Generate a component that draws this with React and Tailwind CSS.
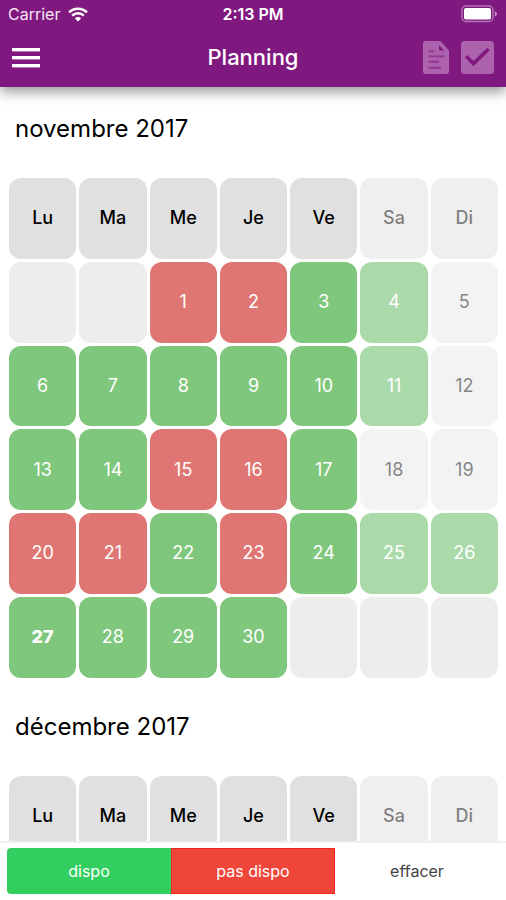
import { useState } from "react";
import clsx from "clsx";

const WEEKDAYS = ["Lu", "Ma", "Me", "Je", "Ve", "Sa", "Di"];

// offset = empty cells before the 1st of the month
const MONTHS = [
  {
    id: "2017-11",
    label: "novembre 2017",
    offset: 2,
    days: 30,
    today: 27,
    busy: [1, 2, 15, 16, 20, 21, 23],
    unset: [5, 12, 18, 19],
  },
  {
    id: "2017-12",
    label: "décembre 2017",
    offset: 4,
    days: 31,
    today: null,
    busy: [],
    unset: [2, 3, 9, 10, 16, 17, 23, 24, 30, 31],
  },
];

const MODES = [
  { id: "dispo", label: "dispo", className: "rounded-l-sm bg-[#32cf60] text-white" },
  { id: "busy", label: "pas dispo", className: "border border-[#f0271c] bg-[#f0463a] text-white" },
  { id: "unset", label: "effacer", className: "text-[#444]" },
];

const dayColors = {
  dispo: "bg-[#7fc77d] text-white",
  busy: "bg-[#df7673] text-white",
  unset: "bg-[#eee] text-[#444]",
};

function buildInitialStatus() {
  const status = {};
  MONTHS.forEach((month) => {
    for (let day = 1; day <= month.days; day++) {
      let value = "dispo";
      if (month.busy.includes(day)) value = "busy";
      if (month.unset.includes(day)) value = "unset";
      status[`${month.id}-${day}`] = value;
    }
  });
  return status;
}

function getWeeks(month) {
  const cells = Array(month.offset).fill(null);
  for (let day = 1; day <= month.days; day++) cells.push(day);
  while (cells.length % 7) cells.push(null);

  const weeks = [];
  for (let i = 0; i < cells.length; i += 7) weeks.push(cells.slice(i, i + 7));
  return weeks;
}

function WifiIcon() {
  return (
    <svg viewBox="0 0 20 15" className="h-[15px] w-5" fill="none" stroke="currentColor" strokeWidth="2.5" aria-hidden="true">
      <path d="M1 5.4a12.8 12.8 0 0 1 18 0" />
      <path d="M4.2 8.7a8.2 8.2 0 0 1 11.6 0" />
      <path d="M10 14.6 6.9 11.4a4.4 4.4 0 0 1 6.2 0z" fill="currentColor" stroke="none" />
    </svg>
  );
}

function BatteryIcon() {
  return (
    <svg viewBox="0 0 37 18" className="h-[18px] w-[37px]" aria-hidden="true">
      <rect x="1" y="1" width="31" height="15.5" rx="4" fill="none" stroke="#fff" strokeOpacity="0.4" strokeWidth="1.4" />
      <rect x="3" y="3" width="27" height="11.5" rx="2" fill="#fff" />
      <path d="M33.8 6.2c1.4.4 2.2 1.4 2.2 2.6s-.8 2.2-2.2 2.6z" fill="#fff" fillOpacity="0.5" />
    </svg>
  );
}

function MenuIcon() {
  return (
    <svg viewBox="0 0 28 22" className="h-[22px] w-7" fill="currentColor" aria-hidden="true">
      <rect y="1" width="28" height="3.4" />
      <rect y="9" width="28" height="3.4" />
      <rect y="17" width="28" height="3.4" />
    </svg>
  );
}

function DocumentIcon() {
  return (
    <svg viewBox="0 0 26 33" className="h-[33px] w-[26px]" aria-hidden="true">
      <path d="M3 0h14.5L26 9.5V30a3 3 0 0 1-3 3H3a3 3 0 0 1-3-3V3a3 3 0 0 1 3-3z" fill="#ad62ad" />
      <path d="M16 4v5.2l5.2.8z" fill="#80197f" />
      <path d="M5.5 10.2h5.5M5.5 15.4h16M5.5 20.8h10.5M5.5 26.8h12.5" stroke="#80197f" strokeOpacity="0.6" strokeWidth="1.9" />
    </svg>
  );
}

function CheckIcon() {
  return (
    <svg viewBox="0 0 33 33" className="size-[33px]" aria-hidden="true">
      <rect width="33" height="33" rx="3.5" fill="#ad62ad" />
      <path d="M5.2 15.2 12.4 22.6 27.6 8" fill="none" stroke="#80197f" strokeWidth="3.6" />
    </svg>
  );
}

function Header() {
  return (
    <header className="relative z-10 bg-[#80197f] text-white shadow-[0_5px_12px_rgba(0,0,0,0.4)]">
      <div className="grid h-7 grid-cols-3 items-center px-2 text-base">
        <div className="flex items-center gap-2">
          <span className="text-[#f3e6f3]">Carrier</span>
          <WifiIcon />
        </div>
        <time className="text-center font-semibold">2:13 PM</time>
        <div className="flex justify-end">
          <BatteryIcon />
        </div>
      </div>
      <div className="grid h-[59px] grid-cols-3 items-center px-3">
        <button type="button" aria-label="Menu" className="w-fit">
          <MenuIcon />
        </button>
        <h1 className="text-center text-[22px] font-medium">Planning</h1>
        <div className="flex justify-end gap-3">
          <button type="button" aria-label="Document">
            <DocumentIcon />
          </button>
          <button type="button" aria-label="Valider">
            <CheckIcon />
          </button>
        </div>
      </div>
    </header>
  );
}

function Month({ month, status, showDays, onPick }) {
  return (
    <section className="pb-1">
      <h2 className="px-[15px] pt-6 pb-7 text-2xl leading-9">{month.label}</h2>
      <div className="pr-[5px] pl-1.5">
        <table className="w-full table-fixed border-separate border-spacing-[3px] text-lg" aria-label={month.label}>
          <thead>
            <tr>
              {WEEKDAYS.map((name, i) => (
                <th key={name} scope="col" className="p-0 font-medium">
                  <div
                    className={clsx(
                      "flex aspect-5/6 items-center justify-center rounded-xl bg-[#e0e0e0] text-black",
                      i > 4 && "opacity-50"
                    )}
                  >
                    {name}
                  </div>
                </th>
              ))}
            </tr>
          </thead>
          {showDays && (
            <tbody>
              {getWeeks(month).map((week, w) => (
                <tr key={w}>
                  {week.map((day, i) => (
                    <td key={i} className="p-0">
                      {day ? (
                        <button
                          type="button"
                          onClick={() => onPick(`${month.id}-${day}`)}
                          className={clsx(
                            "flex aspect-5/6 w-full items-center justify-center rounded-xl",
                            dayColors[status[`${month.id}-${day}`]],
                            i > 4 && "opacity-65",
                            day === month.today && "font-extrabold"
                          )}
                        >
                          {day}
                        </button>
                      ) : (
                        <div className="aspect-5/6 rounded-xl bg-[#ededed]" />
                      )}
                    </td>
                  ))}
                </tr>
              ))}
            </tbody>
          )}
        </table>
      </div>
    </section>
  );
}

export default function App() {
  const [status, setStatus] = useState(buildInitialStatus);
  const [mode, setMode] = useState("dispo");
  const [scrolled, setScrolled] = useState(false);

  const pickDay = (key) => {
    setStatus((prev) => ({ ...prev, [key]: mode }));
  };

  return (
    <div className="flex h-screen flex-col bg-white font-[Inter,sans-serif] text-black">
      <Header />
      {/* days of the later months are only rendered once the user scrolls */}
      <main onScroll={() => setScrolled(true)} className="min-h-0 flex-1 overflow-y-auto [scrollbar-width:none]">
        {MONTHS.map((month, i) => (
          <Month key={month.id} month={month} status={status} showDays={i === 0 || scrolled} onPick={pickDay} />
        ))}
      </main>
      <footer className="border-t-2 border-[#f0f0f0] bg-white px-[7px] pt-[5px] pb-1.5">
        <div className="grid grid-cols-3">
          {MODES.map((m) => (
            <button
              key={m.id}
              type="button"
              aria-pressed={mode === m.id}
              onClick={() => setMode(m.id)}
              className={clsx("h-[46px] text-base", m.className)}
            >
              {m.label}
            </button>
          ))}
        </div>
      </footer>
    </div>
  );
}
